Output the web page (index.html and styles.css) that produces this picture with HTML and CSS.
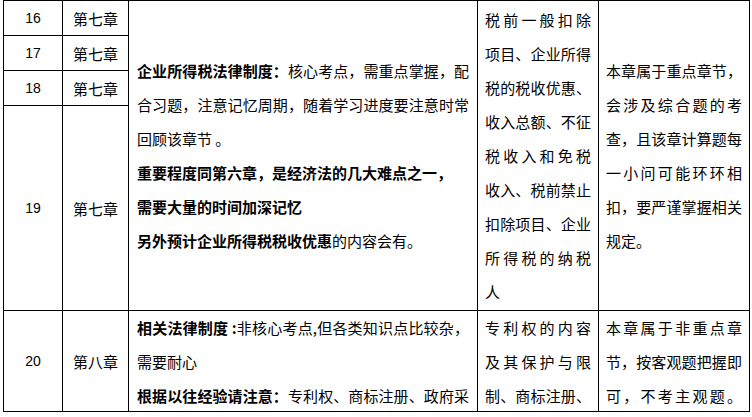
FILE: index.html
```html
<!DOCTYPE html>
<html lang="zh-CN">
<head>
<meta charset="utf-8">
<title>学习计划</title>
<link rel="stylesheet" href="styles.css">
</head>
<body>
<div class="page">
  <table class="plan">
    <colgroup>
      <col class="c-no"><col class="c-ch"><col class="c-desc"><col class="c-pt"><col class="c-note">
    </colgroup>
    <tbody>
      <tr class="row-s">
        <td class="no">16</td>
        <td class="ch">第七章</td>
        <td class="desc" rowspan="4">
          <p>
            <span class="ln"><b>企业所得税法律制度：</b>核心考点，需重点掌握，配</span>
            <span class="ln">合习题，注意记忆周期，随着学习进度要注意时常</span>
            <span class="ln end">回顾该章节 。</span>
          </p>
          <p>
            <b class="ln end">重要程度同第六章，是经济法的几大难点之一，</b>
            <b class="ln end">需要大量的时间加深记忆</b>
          </p>
          <p>
            <span class="ln end"><b>另外预计企业所得税税收优惠</b>的内容会有。</span>
          </p>
        </td>
        <td class="pt" rowspan="4">
          <span class="ln">税前一般扣除</span>
          <span class="ln">项目、企业所得</span>
          <span class="ln">税的税收优惠、</span>
          <span class="ln">收入总额、不征</span>
          <span class="ln">税收入和免税</span>
          <span class="ln">收入、税前禁止</span>
          <span class="ln">扣除项目、企业</span>
          <span class="ln">所得税的纳税</span>
          <span class="ln end">人</span>
        </td>
        <td class="note" rowspan="4">
          <span class="ln">本章属于重点章节，</span>
          <span class="ln">会涉及综合题的考</span>
          <span class="ln">查，且该章计算题每</span>
          <span class="ln">一小问可能环环相</span>
          <span class="ln">扣，要严谨掌握相关</span>
          <span class="ln end">规定。</span>
        </td>
      </tr>
      <tr class="row-s">
        <td class="no">17</td>
        <td class="ch">第七章</td>
      </tr>
      <tr class="row-s">
        <td class="no">18</td>
        <td class="ch">第七章</td>
      </tr>
      <tr class="row-l">
        <td class="no">19</td>
        <td class="ch">第七章</td>
      </tr>
      <tr class="row-last">
        <td class="no">20</td>
        <td class="ch">第八章</td>
        <td class="desc top">
          <div class="clip">
            <span class="ln"><b>相关法律制度 :</b>非核心考点,但各类知识点比较杂，</span>
            <span class="ln end">需要耐心</span>
            <span class="ln"><b>根据以往经验请注意：</b>专利权、商标注册、政府采</span>
          </div>
        </td>
        <td class="pt top">
          <div class="clip">
            <span class="ln">专利权的内容</span>
            <span class="ln">及其保护与限</span>
            <span class="ln">制、商标注册、</span>
          </div>
        </td>
        <td class="note top">
          <div class="clip">
            <span class="ln">本章属于非重点章</span>
            <span class="ln">节，按客观题把握即</span>
            <span class="ln">可，不考主观题。</span>
          </div>
        </td>
      </tr>
    </tbody>
  </table>
</div>
</body>
</html>
```

FILE: styles.css
```css
html, body {
  margin: 0;
  background: #fff;
}

body {
  font-family: "Noto Sans CJK SC", "Noto Sans", sans-serif;
  font-size: 15px;
  color: #000;
}

.page {
  padding-left: 3px;
}

.plan {
  border-collapse: collapse;
  table-layout: fixed;
  width: 747px;
}

.plan td {
  border: 1px solid #000;
  padding: 0;
  vertical-align: middle;
}

.c-no { width: 59px; }
.c-ch { width: 66px; }
.c-desc { width: 349px; }
.c-pt { width: 121px; }
.c-note { width: 151px; }

.row-s { height: 35px; }
.row-l { height: 205px; }

.no,
.ch {
  text-align: center;
}

.no {
  font-family: "Liberation Sans", sans-serif;
  font-size: 14px;
}

.desc {
  padding: 0 8px !important;
  line-height: 34px;
}

.pt,
.note {
  padding: 0 7px !important;
  line-height: 34px;
}

.desc p {
  margin: 0;
}

.ln {
  display: block;
  text-align: justify;
  text-align-last: justify;
}

.ln.end {
  text-align-last: left;
}

.plan td.top {
  vertical-align: top;
}

.clip {
  height: 100px;
  overflow: hidden;
}
```
